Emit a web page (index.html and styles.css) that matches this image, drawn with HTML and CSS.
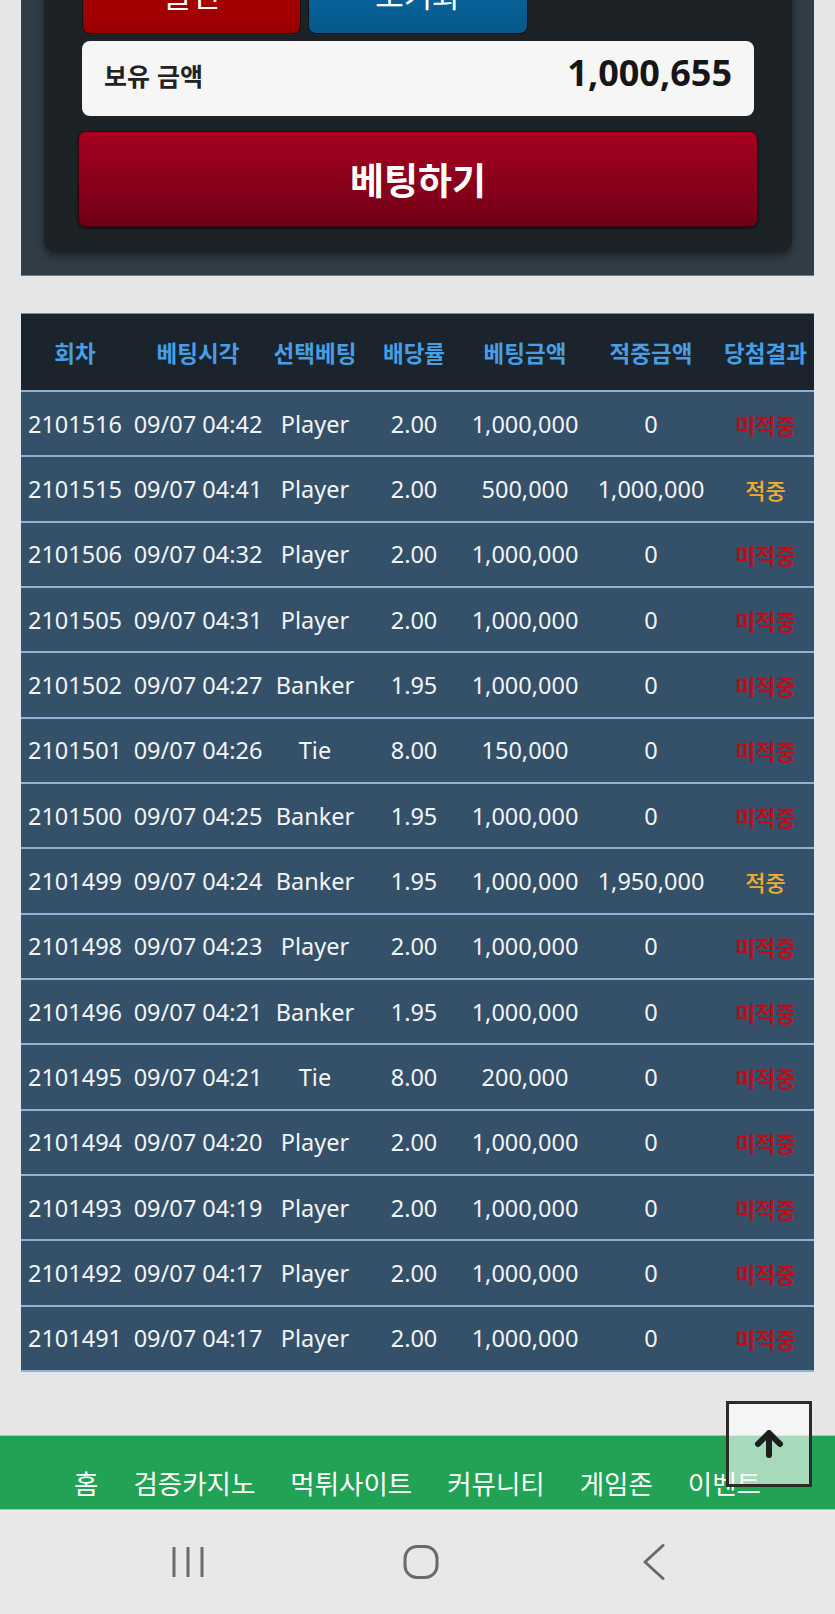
FILE: index.html
```html
<!DOCTYPE html>
<html lang="ko">
<head>
  <meta charset="UTF-8">
  <title>베팅내역</title>
  <link rel="stylesheet" href="styles.css">
</head>
<body>

<div class="page">
  <!-- bet panel -->
  <div class="bet-panel">
    <div class="bet-inner">
      <div class="chip-row">
        <button type="button" class="chip chip-red">올인</button>
        <button type="button" class="chip chip-blue">초기화</button>
      </div>
      <div class="balance">
        <span class="balance-label">보유 금액</span>
        <span class="balance-value">1,000,655</span>
      </div>
      <button type="button" class="bet-btn">베팅하기</button>
    </div>
  </div>

  <!-- history -->
  <table class="history">
    <thead>
      <tr>
        <th>회차</th>
        <th>베팅시각</th>
        <th>선택베팅</th>
        <th>배당률</th>
        <th>베팅금액</th>
        <th>적중금액</th>
        <th>당첨결과</th>
      </tr>
    </thead>
    <tbody>
      <tr><td>2101516</td><td>09/07 04:42</td><td>Player</td><td>2.00</td><td>1,000,000</td><td>0</td><td class="lose">미적중</td></tr>
      <tr><td>2101515</td><td>09/07 04:41</td><td>Player</td><td>2.00</td><td>500,000</td><td>1,000,000</td><td class="win">적중</td></tr>
      <tr><td>2101506</td><td>09/07 04:32</td><td>Player</td><td>2.00</td><td>1,000,000</td><td>0</td><td class="lose">미적중</td></tr>
      <tr><td>2101505</td><td>09/07 04:31</td><td>Player</td><td>2.00</td><td>1,000,000</td><td>0</td><td class="lose">미적중</td></tr>
      <tr><td>2101502</td><td>09/07 04:27</td><td>Banker</td><td>1.95</td><td>1,000,000</td><td>0</td><td class="lose">미적중</td></tr>
      <tr><td>2101501</td><td>09/07 04:26</td><td>Tie</td><td>8.00</td><td>150,000</td><td>0</td><td class="lose">미적중</td></tr>
      <tr><td>2101500</td><td>09/07 04:25</td><td>Banker</td><td>1.95</td><td>1,000,000</td><td>0</td><td class="lose">미적중</td></tr>
      <tr><td>2101499</td><td>09/07 04:24</td><td>Banker</td><td>1.95</td><td>1,000,000</td><td>1,950,000</td><td class="win">적중</td></tr>
      <tr><td>2101498</td><td>09/07 04:23</td><td>Player</td><td>2.00</td><td>1,000,000</td><td>0</td><td class="lose">미적중</td></tr>
      <tr><td>2101496</td><td>09/07 04:21</td><td>Banker</td><td>1.95</td><td>1,000,000</td><td>0</td><td class="lose">미적중</td></tr>
      <tr><td>2101495</td><td>09/07 04:21</td><td>Tie</td><td>8.00</td><td>200,000</td><td>0</td><td class="lose">미적중</td></tr>
      <tr><td>2101494</td><td>09/07 04:20</td><td>Player</td><td>2.00</td><td>1,000,000</td><td>0</td><td class="lose">미적중</td></tr>
      <tr><td>2101493</td><td>09/07 04:19</td><td>Player</td><td>2.00</td><td>1,000,000</td><td>0</td><td class="lose">미적중</td></tr>
      <tr><td>2101492</td><td>09/07 04:17</td><td>Player</td><td>2.00</td><td>1,000,000</td><td>0</td><td class="lose">미적중</td></tr>
      <tr><td>2101491</td><td>09/07 04:17</td><td>Player</td><td>2.00</td><td>1,000,000</td><td>0</td><td class="lose">미적중</td></tr>
    </tbody>
  </table>
</div>

<!-- bottom menu -->
<nav class="bottom-menu">
  <a href="#">홈</a>
  <a href="#">검증카지노</a>
  <a href="#">먹튀사이트</a>
  <a href="#">커뮤니티</a>
  <a href="#">게임존</a>
  <a href="#">이벤트</a>
</nav>

<div class="sys-nav">
  <span class="sys-btn">
    <svg width="40" height="34" viewBox="0 0 40 34"><path d="M6 2v30M20 2v30M34 2v30" stroke="#6a6a6a" stroke-width="3" fill="none"/></svg>
  </span>
  <span class="sys-btn">
    <svg width="40" height="34" viewBox="0 0 40 34"><rect x="4" y="1.5" width="32" height="31" rx="12" stroke="#6a6a6a" stroke-width="3" fill="none"/></svg>
  </span>
  <span class="sys-btn">
    <svg width="40" height="36" viewBox="0 0 40 36"><path d="M29 1.5L11 18l18 16.5" stroke="#6a6a6a" stroke-width="3" fill="none" stroke-linecap="round" stroke-linejoin="round"/></svg>
  </span>
</div>

<a href="#" class="to-top">
  <svg width="30" height="28" viewBox="0 0 30 28"><path d="M15 25V5M4 14L15 3l11 11" stroke="#1e1e1e" stroke-width="6" fill="none" stroke-linecap="round" stroke-linejoin="round"/></svg>
</a>

</body>
</html>
```

FILE: styles.css
```css
body {
  margin: 0;
  padding: 0;
  background: #e6e6e6;
  font-family: "Noto Sans", "Noto Sans CJK KR", sans-serif;
  overflow: hidden;
}

.page {
  height: 1435px;
  overflow: hidden;
}

.bet-panel {
  margin: -40px 21px 0;
  padding: 0 22px 23px 23px;
  background: #313d46;
  border-bottom: 1px solid #6f7c85;
}

.bet-inner {
  background: #1d2226;
  padding: 0 34px 25px;
  border-radius: 0 0 12px 12px;
  box-shadow: 0 4px 8px rgba(0,0,0,0.45);
}

.chip-row {
  display: grid;
  grid-template-columns: repeat(3, 1fr);
  gap: 7px;
  margin: 0 4px;
}

.chip {
  height: 74px;
  border: 1px solid #111;
  border-radius: 8px;
  color: #fff;
  font-family: "Noto Sans CJK KR", sans-serif;
  font-size: 31px;
  padding: 0 0 8px;
}

.chip-red {
  background: linear-gradient(#b40000, #990000);
}

.chip-blue {
  background: linear-gradient(#0b6cab, #055889);
}

.balance {
  display: flex;
  justify-content: space-between;
  align-items: baseline;
  height: 75px;
  box-sizing: border-box;
  margin: 7px 4px 0;
  padding: 14px 22px 0;
  background: #f6f6f6;
  border-radius: 8px;
}

.balance-label {
  font-family: "Noto Sans CJK KR", sans-serif;
  font-size: 25px;
  font-weight: bold;
  color: #222;
}

.balance-value {
  font-size: 36px;
  line-height: 36px;
  font-weight: bold;
  color: #161616;
}

.bet-btn {
  display: block;
  width: 100%;
  height: 96px;
  margin-top: 15px;
  border: 1px solid #3c0009;
  border-radius: 8px;
  background: linear-gradient(#a80021, #6f0015);
  color: #fff;
  font-family: "Noto Sans CJK KR", sans-serif;
  font-size: 37px;
  font-weight: bold;
  box-shadow: 0 2px 3px rgba(0,0,0,0.5);
}

.history {
  width: 793px;
  margin: 37px 21px 0;
  border-collapse: collapse;
  table-layout: fixed;
  border-top: 1px solid #7d8a93;
}

.history th {
  height: 76px;
  padding: 0;
  background: #1b242c;
  color: #469fe5;
  font-family: "Noto Sans CJK KR", sans-serif;
  font-size: 22.5px;
  font-weight: bold;
  white-space: nowrap;
}

.history th:nth-child(1) { width: 108px; }
.history th:nth-child(2) { width: 138px; }
.history th:nth-child(3) { width: 96px; }
.history th:nth-child(4) { width: 102px; }
.history th:nth-child(5) { width: 120px; }
.history th:nth-child(6) { width: 132px; }
.history th:nth-child(7) { width: 97px; }

.history td {
  height: 63.33px;
  padding: 0;
  background: #35516a;
  border-top: 2px solid #8db2d3;
  color: #f2f4f6;
  font-size: 23.5px;
  text-align: center;
  white-space: nowrap;
}

.history tr:last-child td {
  border-bottom: 2px solid #8db2d3;
}

.history td.lose {
  color: #b80f1b;
  font-family: "Noto Sans CJK KR", sans-serif;
  font-size: 22px;
  font-weight: bold;
}

.history td.win {
  color: #f0ad30;
  font-family: "Noto Sans CJK KR", sans-serif;
  font-size: 22px;
  font-weight: 500;
}

.bottom-menu {
  display: flex;
  justify-content: center;
  gap: 35px;
  height: 75px;
  box-sizing: border-box;
  padding-top: 28px;
  background: #21a254;
  border-top: 1px solid #8fd3aa;
  border-bottom: 1px solid #8fd3aa;
}

.bottom-menu a {
  color: #fff;
  text-decoration: none;
  font-family: "Noto Sans CJK KR", sans-serif;
  font-size: 26.5px;
  line-height: 38px;
}

.sys-nav {
  display: flex;
  justify-content: center;
  align-items: center;
  gap: 193px;
  height: 104px;
  padding-left: 7px;
  background: #e8e8e8;
}

.sys-btn {
  display: flex;
  width: 40px;
  justify-content: center;
}

.to-top {
  position: fixed;
  right: 23px;
  bottom: 127px;
  width: 80px;
  height: 80px;
  display: flex;
  align-items: center;
  justify-content: center;
  border: 3px solid #2b2b2b;
  background: rgba(255,255,255,0.6);
}
```
